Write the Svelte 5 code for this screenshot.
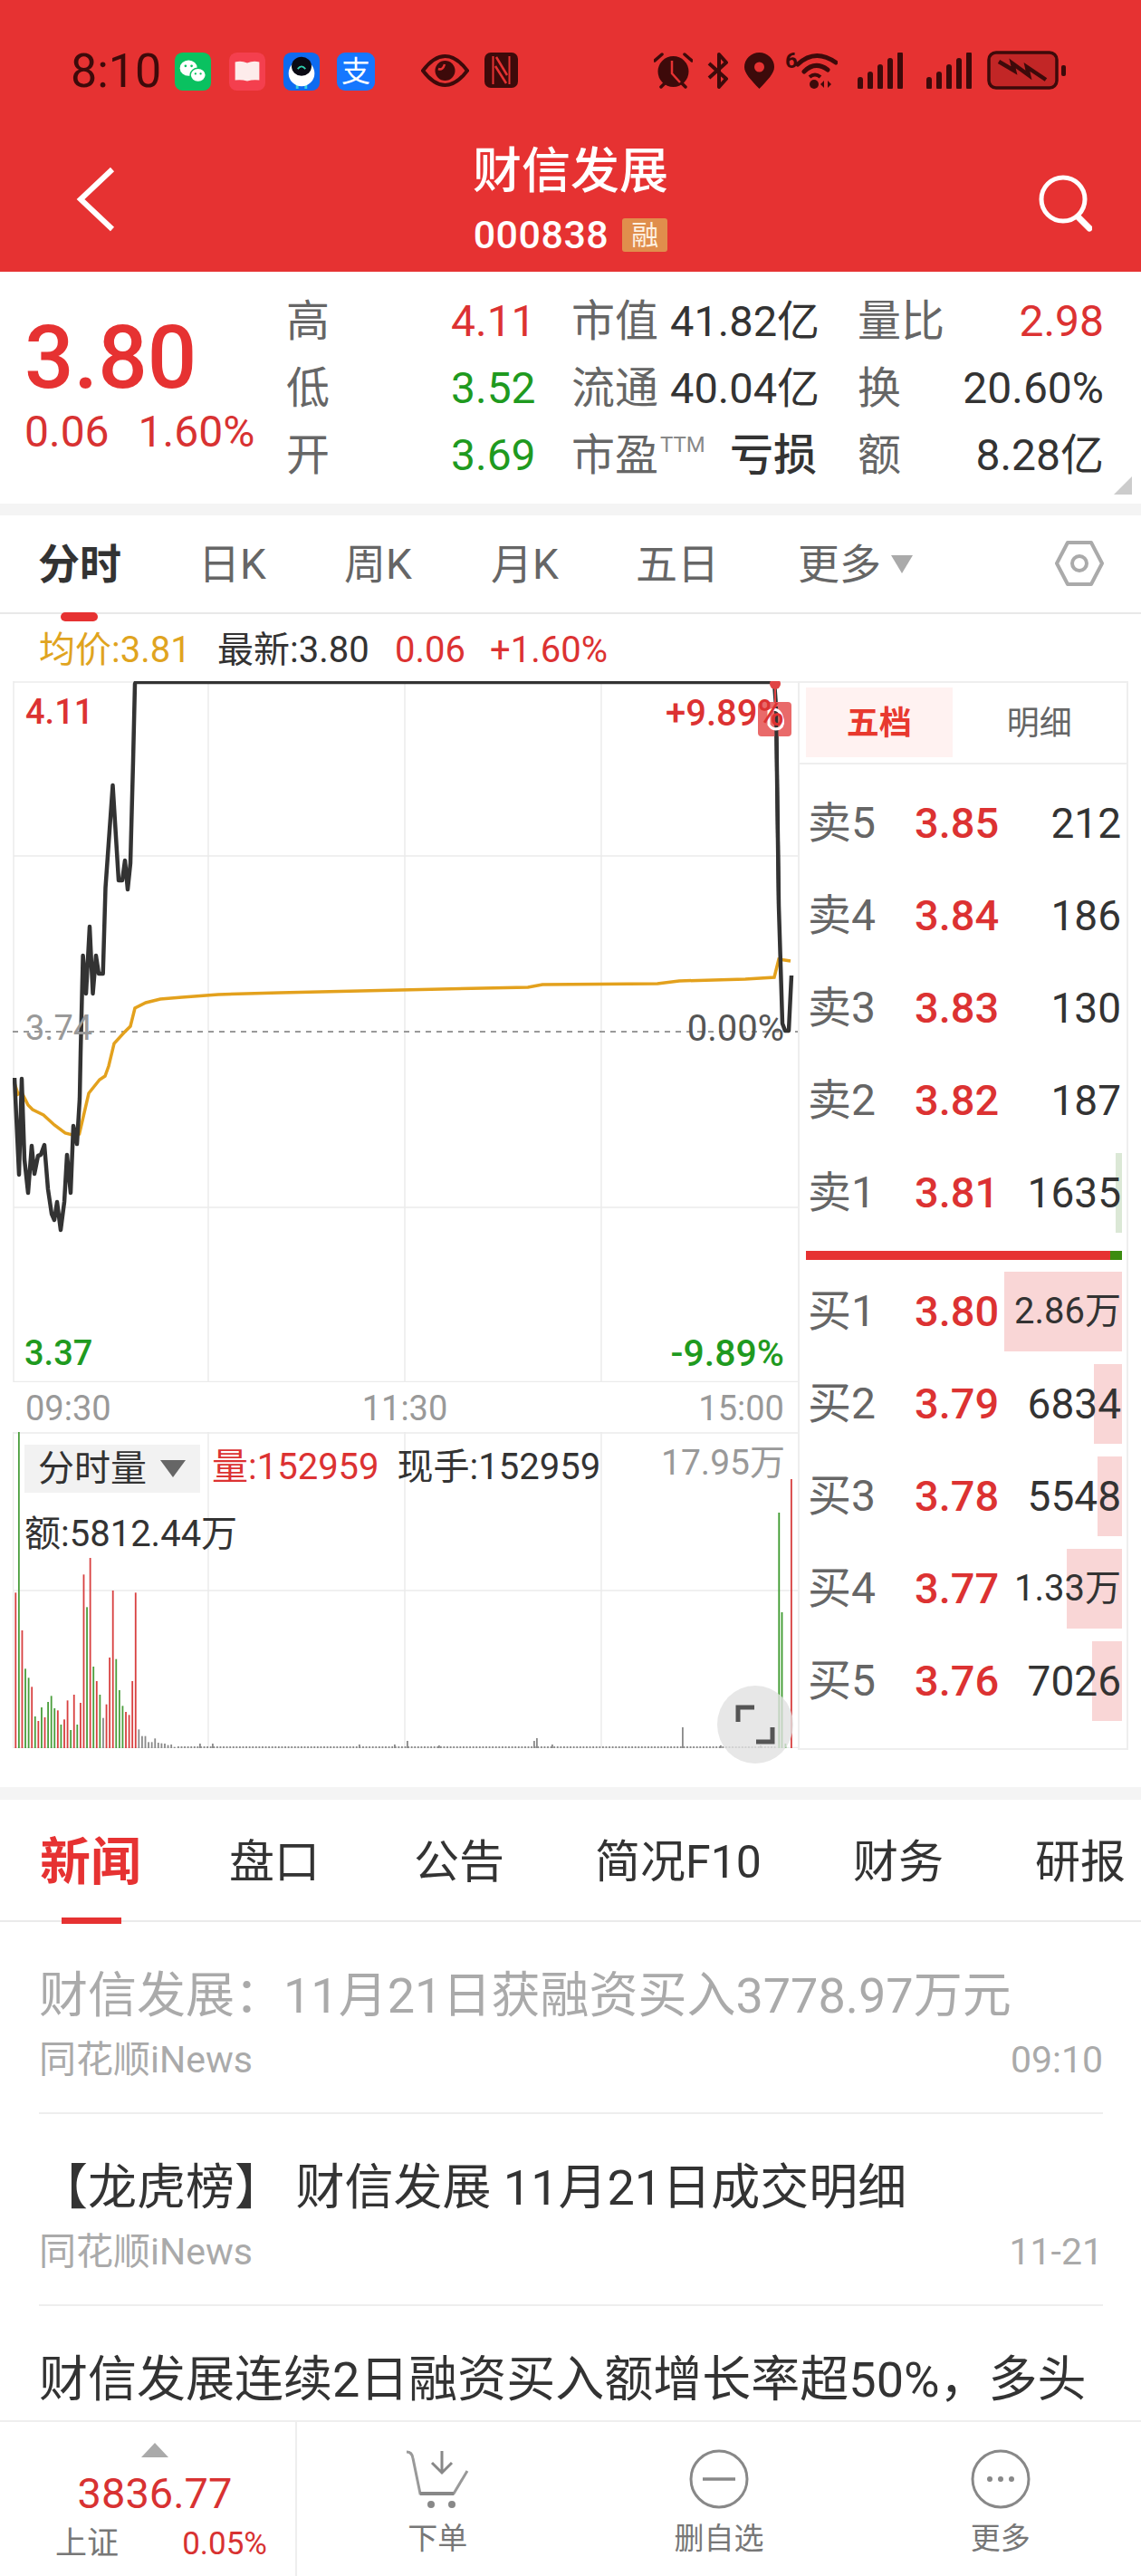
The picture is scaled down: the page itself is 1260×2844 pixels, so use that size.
<script>
  const sell = [["卖5","3.85","212"],["卖4","3.84","186"],["卖3","3.83","130"],["卖2","3.82","187"],["卖1","3.81","1635"]];
  const buy = [["买1","3.80","2.86万",130,true],["买2","3.79","6834",31,false],["买3","3.78","5548",27,false],["买4","3.77","1.33万",61,true],["买5","3.76","7026",33,false]];
  const black = "16,1190 21,1297 24,1191 27,1280 31,1317 35,1265 38,1296 42,1276 45,1275 49,1264 53,1313 57,1340 60,1347 63,1327 67,1358 71,1327 74,1275 78,1317 81,1243 85,1263 88,1213 89,1163 91.6,1055 95,1097 99,1023 102.5,1097 106,1055 109,1075 113.7,1075 116.5,980 124.5,867 131,972 135,972 138,950 141,982 144,953 147,840 149,755 150,753 855,753 857,780 860,1000 864,1130 867,1138 871,1138 874,1077";
  const gold = "16,1196 20,1208 24,1206 27,1212 31,1220 36,1225 48,1231 60,1242 72,1251 80,1253 87.6,1252 98,1207 110,1192 116,1188 120,1177 126,1152 137,1140 144,1133 149,1113 161,1107 177,1103 201,1101 241,1098 309,1096 442,1093 583,1090 599,1087 726,1086 750,1083 823,1081 855,1079 860,1059 873,1061";
  const R = "#d84040", G = "#4a9e3c", K = "#8a8a8a";
  const head = [[R,775],[G,0],[R,900],[G,1027],[G,1057],[R,1087],[G,1185],[R,1200],[G,1155],[R,1188],[G,1137],[G,1117],[G,1158],[R,1165],[G,1212],[R,1195],[R,1132],[G,1230],[R,1113],[G,1212],[R,1140],[R,715],[G,823],[R,660],[G,1020],[R,1068],[G,1113],[K,1190],[R,1145],[R,990],[R,768],[G,995],[G,1098],[G,1150],[R,1170],[R,1180],[R,1068],[R,775],[K,1228],[K,1250],[K,1250],[K,1270],[K,1270],[K,1258],[K,1272],[K,1274],[K,1275],[K,1280],[K,1278],[K,1286]];
  const bars = head.map(([c, t], i) => {
    const y = t === 0 ? 1581 : 1500 + t / 3;
    return { x: 16.4 + i * 3.58, y, h: 1930 - y, c };
  });
  const spikes = { 220: 1925, 234: 1925, 396: 1926, 435: 1926, 449: 1922, 484: 1927, 589: 1922, 592: 1919, 609: 1926, 753: 1907, 795: 1927, 839: 1927 };
  for (let x = 196; x < 858; x += 3.58) bars.push({ x, y: 1928, h: 2, c: K });
  for (const k of Object.keys(spikes)) bars.push({ x: +k, y: spikes[k], h: 1930 - spikes[k], c: K });
  bars.push({ x: 859.4, y: 1670, h: 260, c: "#3d9a2e" }, { x: 862.6, y: 1780, h: 150, c: "#3d9a2e" }, { x: 866.5, y: 1925, h: 5, c: "#3d9a2e" }, { x: 873, y: 1633, h: 297, c: "#d84040" });
</script>

<div class="app">
  <header class="head">
    <div class="status">
      <span class="clock">8:10</span>
      <div class="apps">
        <svg class="app-ico" viewBox="0 0 42 44"><rect width="42" height="44" rx="9" fill="#0ac160"/><ellipse cx="16" cy="18" rx="10" ry="9" fill="#fff"/><ellipse cx="27" cy="26" rx="9" ry="8" fill="#fff" stroke="#0ac160" stroke-width="1.5"/><circle cx="12.5" cy="15.5" r="1.4" fill="#0ac160"/><circle cx="19.5" cy="15.5" r="1.4" fill="#0ac160"/><circle cx="24" cy="24.5" r="1.2" fill="#0ac160"/><circle cx="30" cy="24.5" r="1.2" fill="#0ac160"/></svg>
        <svg class="app-ico" viewBox="0 0 42 44"><rect width="42" height="44" rx="9" fill="#f43f4e"/><path d="M7 11 Q14 9 21 12 Q28 9 35 11 V32 Q28 31 21 33 Q14 31 7 32Z" fill="#fdeceb"/></svg>
        <svg class="app-ico" viewBox="0 0 42 44"><rect width="42" height="44" rx="9" fill="#0e6bf0"/><path d="M16 37v5M26 37v5" stroke="#35d0e0" stroke-width="3"/><ellipse cx="21" cy="24" rx="15" ry="15" fill="#fff"/><ellipse cx="21" cy="16" rx="11.5" ry="11" fill="#0a0a14"/><path d="M16.5 19q4.5-6 9 0" fill="none" stroke="#30d0b0" stroke-width="1.8"/></svg>
        <div class="alipay">支</div>
      </div>
      <svg class="eye" viewBox="0 0 53 36"><path d="M2 18Q14 2 26.500 2T51 18Q39 34 26.500 34T2 18Z" fill="none" stroke="#3d0a0a" stroke-width="4"/><circle cx="26.500" cy="18" r="11" fill="#3d0a0a"/><path d="M19 16q5 2 7-5" fill="none" stroke="#e63232" stroke-width="2.500"/></svg>
      <svg class="nfc" viewBox="0 0 37 39"><rect width="37" height="39" rx="7" fill="#3d0a0a"/><path d="M9.500 4V35M27.500 4V35" stroke="#e63232" stroke-width="2"/><path d="M13 5L25 25M12 15L24 34" stroke="#e63232" stroke-width="2.500"/></svg>
      <svg class="alarm" viewBox="0 0 43 40"><path d="M1 9l8-7M42 9l-8-7M8 38l4-4M35 38l-4-4" stroke="#3d0a0a" stroke-width="3.500" stroke-linecap="round"/><circle cx="21.500" cy="21" r="17" fill="#3d0a0a"/><path d="M20 9v14l9 10" fill="none" stroke="#e63232" stroke-width="2.500"/></svg>
      <svg class="bt" viewBox="0 0 25 40"><path d="M2 12l19 17-8 9V2l8 9L2 28" fill="none" stroke="#3d0a0a" stroke-width="4" stroke-linejoin="round"/></svg>
      <svg class="loc" viewBox="0 0 33 40"><path d="M16.500 40C7 30 0 23 0 16a16.500 16 0 0 1 33 0c0 7-7 14-16.500 24Z" fill="#3d0a0a"/><circle cx="16.500" cy="16" r="5.500" fill="#e63232"/></svg>
      <div class="wifi">
        <span class="six">6</span>
        <svg viewBox="0 0 58 42"><path d="M14 15Q33-3 56 13M21 23Q33 11 47 21" fill="none" stroke="#3d0a0a" stroke-width="5" stroke-linecap="round"/><path d="M27 29Q33 24 39 29" fill="none" stroke="#3d0a0a" stroke-width="4"/><circle cx="32" cy="37" r="5" fill="#3d0a0a"/><path d="M43 41v-8l-4 4zM47 33v8l4-4z" fill="#3d0a0a"/></svg>
      </div>
      <svg class="sig" viewBox="0 0 51 40"><path d="M3 38v-8M14 38V24M25 38V16M36 38V9M47 38V2" stroke="#3d0a0a" stroke-width="6" stroke-linecap="round"/></svg>
      <svg class="sig sig2" viewBox="0 0 51 40"><path d="M3 38v-8M14 38V24M25 38V16M36 38V9M47 38V2" stroke="#3d0a0a" stroke-width="6" stroke-linecap="round"/></svg>
      <svg class="bat" viewBox="0 0 87 43"><rect x="2" y="2" width="75" height="39" rx="8" fill="#c22626" stroke="#3d0a0a" stroke-width="3.500"/><rect x="82" y="16" width="5" height="12" rx="2" fill="#3d0a0a"/><path d="M13 12L30 22 28 14 46 27 44 18 65 32" fill="none" stroke="#3d0a0a" stroke-width="4.500" stroke-linejoin="miter"/></svg>
    </div>
    <div class="nav">
      <svg class="back" viewBox="0 0 44 72"><path d="M40 3L5 36l35 33" fill="none" stroke="#fff" stroke-width="6"/></svg>
      <div class="titles">
        <div class="title">财信发展</div>
        <div class="code"><span>000838</span><span class="rong">融</span></div>
      </div>
      <svg class="search" viewBox="0 0 60 72"><circle cx="28" cy="32" r="24" fill="none" stroke="#fff" stroke-width="5"/><path d="M45 52l12 12" stroke="#fff" stroke-width="7" stroke-linecap="round"/></svg>
    </div>
  </header>

  <section class="quote">
    <div class="price">
      <div class="big">3.80</div>
      <div class="chg"><span>0.06</span><span>1.60%</span></div>
    </div>
    <div class="stats">
      <span class="lb">高</span><span class="val red">4.11</span><span class="lb">市值</span><span class="val mid">41.82亿</span><span class="lb">量比</span><span class="val end red">2.98</span>
      <span class="lb">低</span><span class="val green">3.52</span><span class="lb">流通</span><span class="val mid">40.04亿</span><span class="lb">换</span><span class="val end">20.60%</span>
      <span class="lb">开</span><span class="val green">3.69</span><span class="lb pe">市盈<sup>TTM</sup></span><span class="val loss">亏损</span><span class="lb">额</span><span class="val end">8.28亿</span>
    </div>
    <div class="corner"></div>
  </section>

  <nav class="ktabs">
    <span class="on">分时<i></i></span><span>日K</span><span>周K</span><span>月K</span><span>五日</span>
    <span class="more">更多<b></b></span>
    <svg class="hex" viewBox="0 0 54 52"><path d="M14 3h26l12 23-12 23H14L2 26Z" fill="none" stroke="#aaa" stroke-width="4" stroke-linejoin="round"/><circle cx="27" cy="26" r="8" fill="none" stroke="#aaa" stroke-width="4"/></svg>
  </nav>

  <div class="info">
    <span class="avg">均价:3.81</span><span class="now">最新:3.80</span><span class="red d1">0.06</span><span class="red">+1.60%</span>
  </div>

  <section class="market">
    <div class="charts">
      <div class="main">
        <svg class="plot" viewBox="14 752 867 774">
          <g stroke="#ebebeb" stroke-width="1.500">
            <path d="M15 945H881M15 1333H881M230 752V1526M447 752V1526M664 752V1526M15 753H881M15 752V1526M15 1525.500H881"/>
          </g>
          <path d="M14 1139H881" stroke="#999" stroke-width="2" stroke-dasharray="6 6"/>
          <polyline points={gold} fill="none" stroke="#e3a11d" stroke-width="3.500"/>
          <polyline points={black} fill="none" stroke="#333" stroke-width="4.500" stroke-linejoin="round"/>
          <circle cx="856" cy="755" r="6" fill="#e04545"/>
          <rect x="837" y="775" width="37" height="38" rx="4" fill="#e96a6a"/>
          <path d="M856 760v16" stroke="#e04545" stroke-width="2"/>
          <polyline points="857,780 860,1000" fill="none" stroke="#333" stroke-width="4"/>
          <path d="M849 785q10-5 14 5t-2 14q-8 3-12-4z" fill="none" stroke="#fff" stroke-width="3"/>
        </svg>
        <span class="lab l-high">4.11</span>
        <span class="lab l-pct">+9.89%</span>
        <span class="lab l-pre">3.74</span>
        <span class="lab l-zero">0.00%</span>
        <span class="lab l-low">3.37</span>
        <span class="lab l-neg">-9.89%</span>
      </div>
      <div class="axis"><span>09:30</span><span>11:30</span><span>15:00</span></div>
      <div class="vol">
        <svg class="plot" viewBox="14 1581 867 349">
          <path d="M15 1756H881M230 1581V1930M447 1581V1930M664 1581V1930M15 1582H881M14.500 1581V1930M14 1929.500H881" stroke="#ebebeb" stroke-width="1.500" fill="none"/>
          {#each bars as b}
            <rect x={b.x} y={b.y} width="1.800" height={b.h} fill={b.c}/>
          {/each}
        </svg>
        <div class="sel">分时量<b></b></div>
        <div class="v-now"><span class="red">量:152959</span><span>现手:152959</span></div>
        <div class="v-amt">额:5812.44万</div>
        <div class="v-max">17.95万</div>
        <div class="expand">
          <svg viewBox="0 0 44 44"><path d="M3 19V3H21M41 25V41H23" fill="none" stroke="#555" stroke-width="5"/></svg>
        </div>
      </div>
    </div>
    <aside class="book">
      <div class="btabs"><span class="act">五档</span><span>明细</span></div>
      <div class="sells">
        {#each sell as r, i}
          <div class="row">
            {#if i === 4}<div class="fill gr"></div>{/if}
            <span class="k">{r[0]}</span><span class="p">{r[1]}</span><span class="q">{r[2]}</span>
          </div>
        {/each}
      </div>
      <div class="ratio"><i></i><b></b></div>
      {#each buy as r}
        <div class="row">
          <div class="fill" style="width:{r[3]}px"></div>
          <span class="k">{r[0]}</span><span class="p">{r[1]}</span><span class="q" class:small={r[4]}>{r[2]}</span>
        </div>
      {/each}
    </aside>
  </section>

  <div class="band"></div>

  <nav class="ntabs">
    <span class="on">新闻<i></i></span><span>盘口</span><span>公告</span><span>简况F10</span><span>财务</span><span>研报</span>
  </nav>

  <div class="news">
    <article>
      <h3 class="read">财信发展：11月21日获融资买入3778.97万元</h3>
      <p><span>同花顺iNews</span><span>09:10</span></p>
    </article>
    <article>
      <h3>【龙虎榜】 财信发展 11月21日成交明细</h3>
      <p><span>同花顺iNews</span><span>11-21</span></p>
    </article>
    <article class="last">
      <h3>财信发展连续2日融资买入额增长率超50%，多头</h3>
    </article>
  </div>

  <footer class="foot">
    <div class="idx">
      <b class="up"></b>
      <div class="ival">3836.77</div>
      <div class="isub"><span>上证</span><span class="red">0.05%</span></div>
    </div>
    <div class="act-item">
      <svg viewBox="0 0 72 66"><path d="M2 3Q8 3 9 10L17 49H54L69 24" fill="none" stroke="#999" stroke-width="3"/><path d="M17 49H54" stroke="#888" stroke-width="4"/><path d="M41 2V25M30 15L41 26 52 15" fill="none" stroke="#888" stroke-width="3"/><circle cx="29" cy="61" r="4" fill="#888"/><circle cx="52" cy="61" r="4" fill="#888"/></svg>
      <span>下单</span>
    </div>
    <div class="act-item">
      <svg viewBox="0 0 72 66"><circle cx="36" cy="33" r="31" fill="none" stroke="#888" stroke-width="3"/><path d="M18 33H54" stroke="#888" stroke-width="3.500"/></svg>
      <span>删自选</span>
    </div>
    <div class="act-item">
      <svg viewBox="0 0 72 66"><circle cx="36" cy="33" r="31" fill="none" stroke="#888" stroke-width="3"/><circle cx="24" cy="33" r="3" fill="#888"/><circle cx="36" cy="33" r="3" fill="#888"/><circle cx="48" cy="33" r="3" fill="#888"/></svg>
      <span>更多</span>
    </div>
  </footer>
</div>

<style>
  :global(body) { margin: 0; background: #fff; }
  .app { width: 1260px; height: 2844px; overflow: hidden; position: relative; background: #fff; font-family: Roboto, "Noto Sans CJK SC", sans-serif; color: #333; }
  .red { color: #dc3232; }

  .head { height: 300px; background: #e63232; color: #fff; box-sizing: border-box; }
  .status { display: flex; align-items: flex-start; padding: 56px 0 0 78px; height: 110px; box-sizing: border-box; color: #3d0a0a; }
  .clock { width: 114px; font-size: 52px; line-height: 46px; color: #3d0a0a; white-space: nowrap; }
  .apps { display: flex; gap: 18px; width: 273px; margin-top: 2px; }
  .app-ico { width: 42px; height: 42px; flex: none; }
  .alipay { width: 42px; height: 42px; border-radius: 9px; background: #1677ff; color: #fff; font-size: 32px; line-height: 42px; text-align: center; flex: none; }
  .eye { width: 53px; height: 36px; margin-top: 4px; flex: none; }
  .nfc { width: 37px; height: 39px; margin: 2px 0 0 17px; flex: none; }
  .alarm { width: 43px; height: 40px; margin: 2px 0 0 150px; flex: none; }
  .bt { width: 25px; height: 40px; margin: 2px 0 0 16px; flex: none; }
  .loc { width: 33px; height: 40px; margin: 2px 0 0 16px; flex: none; }
  .wifi { width: 58px; height: 42px; margin: 0 0 0 12px; flex: none; position: relative; }
  .wifi svg { display: block; width: 58px; height: 42px; }
  .six { position: absolute; left: 0; top: 0; font-size: 24px; line-height: 22px; font-weight: 700; color: #3d0a0a; }
  .sig { width: 51px; height: 40px; margin: 2px 0 0 22px; flex: none; }
  .sig2 { margin-left: 25px; }
  .bat { width: 87px; height: 43px; margin-left: 16px; flex: none; }

  .nav { position: relative; height: 190px; }
  .back { position: absolute; left: 84px; top: 74px; width: 44px; height: 72px; }
  .search { position: absolute; left: 1146px; top: 78px; width: 60px; height: 72px; }
  .titles { display: flex; flex-direction: column; align-items: center; padding-top: 50px; }
  .title { font-size: 54px; line-height: 60px; font-weight: 500; }
  .code { display: flex; align-items: center; gap: 15px; font-size: 43px; line-height: 46px; margin-top: 16px; letter-spacing: 0.5px; font-weight: 500; }
  .rong { width: 50px; height: 37px; border-radius: 3px; background: #e08e4c; color: #fdf1e2; font-size: 30px; line-height: 37px; text-align: center; letter-spacing: 0; font-weight: 400; }

  .quote { display: flex; height: 256px; position: relative; }
  .price { width: 319px; padding: 48px 0 0 27px; box-sizing: border-box; flex: none; }
  .big { font-size: 96px; line-height: 94px; font-weight: 500; color: #e63232; }
  .chg { display: flex; gap: 32px; font-size: 48px; line-height: 50px; margin-top: 10px; color: #d83232; white-space: nowrap; }
  .stats { display: grid; grid-template-columns: 182px 133px 109px 207px 100px 172px; grid-auto-rows: 74px; padding-top: 18px; margin-left: -3px; align-items: center; }
  .lb { font-size: 48px; color: #666; line-height: 60px; white-space: nowrap; }
  .val { font-size: 48px; line-height: 60px; color: #333; white-space: nowrap; }
  .val.mid { font-size: 47px; }
  .val.red { color: #dc3232; }
  .val.green { color: #1f9a1f; }
  .end { text-align: right; }
  .pe sup { font-size: 24px; line-height: 0; color: #888; vertical-align: 20px; margin-left: 2px; }
  .loss { padding-left: 66px; font-weight: 500; }
  .corner { position: absolute; right: 10px; bottom: 10px; width: 20px; height: 20px; background: #ccc; clip-path: polygon(100% 0, 100% 100%, 0 100%); }

  .ktabs { border-top: 13px solid #f4f4f4; height: 122px; box-sizing: border-box; border-bottom: 2px solid #e8e8e8; display: grid; grid-template-columns: 177px 161px 162px 160px 179px 284px 1fr; padding-left: 42px; align-items: center; font-size: 46px; color: #666; line-height: 60px; }
  .ktabs .on { font-weight: 700; color: #333; position: relative; }
  .ktabs .on i { position: absolute; left: 25px; bottom: -33px; width: 41px; height: 10px; border-radius: 5px; background: #e63232; }
  .more { display: flex; align-items: center; }
  .more b { width: 0; height: 0; margin: 0 0 0 11px; border-left: 12px solid transparent; border-right: 12px solid transparent; border-top: 20px solid #aaa; }
  .hex { width: 54px; height: 52px; margin-top: -2px; }

  .info { height: 74px; display: flex; align-items: center; padding: 5px 0 0 43px; font-size: 40px; box-sizing: border-box; line-height: 50px; }
  .avg { color: #e0a41f; width: 197px; }
  .now { color: #333; width: 196px; }
  .d1 { width: 105px; }

  .market { display: flex; padding-left: 14px; height: 1178px; }
  .charts { width: 867px; flex: none; }
  .main { height: 774px; position: relative; }
  .plot { display: block; width: 867px; height: 100%; }
  .lab { position: absolute; font-size: 38px; line-height: 44px; white-space: nowrap; }
  .l-high { left: 14px; top: 12px; color: #dc3232; font-weight: 500; }
  .l-pct { right: 15px; top: 14px; color: #dc3232; font-weight: 500; font-size: 40px; }
  .l-pre { left: 14px; top: 361px; color: #999; }
  .l-zero { right: 15px; top: 362px; color: #555; font-size: 40px; }
  .l-low { left: 13px; top: 720px; color: #1f9a1f; font-weight: 500; }
  .l-neg { right: 15px; top: 720px; color: #1f9a1f; font-weight: 500; font-size: 41px; }
  .axis { height: 55px; display: flex; justify-content: space-between; padding: 2px 15px 0 14px; font-size: 38px; line-height: 44px; color: #999; align-items: center; box-sizing: border-box; }
  .vol { height: 349px; position: relative; }
  .sel { position: absolute; left: 13px; top: 14px; width: 194px; height: 53px; background: #f2f2f2; padding-left: 15px; box-sizing: border-box; font-size: 40px; line-height: 52px; display: flex; align-items: center; color: #333; }
  .sel b { width: 0; height: 0; margin-left: 15px; border-left: 14px solid transparent; border-right: 14px solid transparent; border-top: 19px solid #666; }
  .v-now { position: absolute; left: 220px; top: 13px; display: flex; gap: 20px; font-size: 40px; line-height: 52px; white-space: nowrap; }
  .v-amt { position: absolute; left: 13px; top: 88px; font-size: 40px; line-height: 50px; white-space: nowrap; }
  .v-max { position: absolute; right: 14px; top: 12px; font-size: 39px; line-height: 44px; color: #999; white-space: nowrap; }
  .expand { position: absolute; left: 778px; top: 280px; width: 84px; height: 86px; border-radius: 50%; background: rgba(225,225,225,.8); display: flex; align-items: center; justify-content: center; }
  .expand svg { width: 44px; height: 44px; }

  .book { width: 365px; box-sizing: border-box; border: 2px solid #eee; height: 1180px; flex: none; }
  .btabs { height: 90px; border-bottom: 2px solid #eee; box-sizing: border-box; display: flex; padding: 5px 0 0 7px; font-size: 36px; color: #666; }
  .btabs span { width: 168px; height: 77px; line-height: 80px; text-align: center; }
  .btabs span + span { width: 200px; }
  .btabs .act { background: #fff2f1; color: #e8392e; font-weight: 700; }
  .sells { padding-top: 14px; }
  .row { height: 102px; display: flex; align-items: center; padding: 0 6px 0 9px; position: relative; line-height: 60px; }
  .k { font-size: 48px; color: #666; width: 118px; position: relative; flex: none; }
  .p { font-size: 47px; color: #dc3232; font-weight: 500; width: 91px; position: relative; flex: none; }
  .q { font-size: 46px; color: #333; flex: 1; text-align: right; position: relative; white-space: nowrap; }
  .small { font-size: 40px; }
  .fill { position: absolute; right: 5px; top: 7px; bottom: 7px; background: #f9d6d6; }
  .fill.gr { width: 7px; background: #dbe8d6; }
  .ratio { display: flex; margin: 13px 5px 6px 7px; height: 10px; }
  .ratio i { flex: 1; background: #e63232; }
  .ratio b { width: 13px; background: #3c8c10; }

  .band { height: 14px; margin-top: 43px; background: #f4f4f4; }
  .ntabs { height: 135px; display: grid; grid-template-columns: 209px 204px 200px 285px 201px 1fr; padding: 4px 0 0 44px; align-items: center; border-bottom: 2px solid #eaeaea; box-sizing: border-box; font-size: 50px; color: #333; white-space: nowrap; line-height: 60px; }
  .ntabs .on { font-size: 56px; font-weight: 700; color: #e63232; position: relative; }
  .ntabs .on i { position: absolute; left: 24px; bottom: -38px; width: 66px; height: 7px; background: #e63232; }

  .news { padding: 0 42px 0 43px; height: 550px; overflow: hidden; }
  article { height: 212px; box-sizing: border-box; border-bottom: 2px solid #eee; padding-top: 47px; }
  article h3 { margin: 0; font-size: 54px; line-height: 70px; font-weight: 400; color: #333; white-space: nowrap; }
  article h3.read { color: #aaa; }
  article p { margin: 7px 0 0; display: flex; justify-content: space-between; font-size: 41px; line-height: 56px; color: #aaa; }
  article.last { border: 0; padding-top: 47px; }

  .foot { height: 172px; border-top: 2px solid #eee; box-sizing: border-box; display: grid; grid-template-columns: 328px 1fr 1fr 1fr; }
  .idx { border-right: 2px solid #eee; display: flex; flex-direction: column; align-items: center; box-sizing: border-box; padding-left: 16px; }
  .up { width: 0; height: 0; border-left: 15px solid transparent; border-right: 15px solid transparent; border-bottom: 16px solid #aaa; margin-top: 23px; }
  .ival { color: #d83232; font-size: 47px; line-height: 50px; margin-top: 15px; white-space: nowrap; }
  .isub { display: flex; width: 234px; justify-content: space-between; font-size: 35px; line-height: 44px; margin: 9px 0 0 14px; color: #777; }
  .isub .red { color: #d83232; }
  .act-item { display: flex; flex-direction: column; align-items: center; padding-top: 30px; color: #777; font-size: 33px; line-height: 40px; }
  .act-item svg { width: 72px; height: 66px; }
  .act-item span { margin-top: 13px; }
</style>
